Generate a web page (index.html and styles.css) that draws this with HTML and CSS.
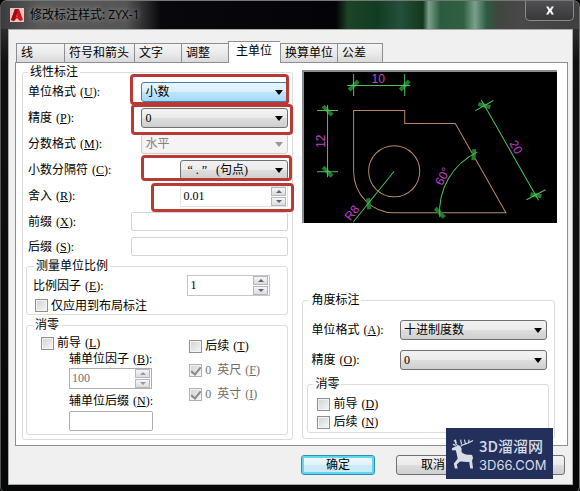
FILE: index.html
```html
<!DOCTYPE html>
<html lang="zh-CN">
<head>
    <meta charset="UTF-8">
    <meta name="viewport" content="width=device-width, initial-scale=1.0">
    <title>修改标注样式: ZYX-1</title>
    <link rel="stylesheet" href="styles.css">
</head>
<body>
    <div class="window">
        <header class="titlebar">
            <svg class="app-icon" viewBox="0 0 14 14" aria-hidden="true">
                <rect width="14" height="14" fill="#f0c4c4"/>
                <path d="M1 12 L5 1 H9 L13 12 L10 13 L7 10 L4 13 Z" fill="#d0141c"/>
                <path d="M5 1 H8 L6 9 L4 13 L1 12 Z" fill="#9c0c14"/>
                <path d="M7 6 L8 9 H6 Z" fill="#e8484c"/>
            </svg>
            <h1>修改标注样式: ZYX-1</h1>
            <button class="close" type="button" aria-label="关闭">
                <svg viewBox="0 0 12 10" aria-hidden="true">
                    <path d="M1 0 H4 L6 3 L8 0 H11 L8 5 L11 10 H8 L6 7 L4 10 H1 L4 5 Z" fill="#fff" stroke="#333" stroke-width="0.4"/>
                </svg>
            </button>
        </header>

        <form class="client">
            <nav class="tabs">
                <button type="button">线</button>
                <button type="button">符号和箭头</button>
                <button type="button">文字</button>
                <button type="button">调整</button>
                <button type="button" class="active">主单位</button>
                <button type="button">换算单位</button>
                <button type="button">公差</button>
            </nav>

            <main class="panel">
                <fieldset class="linear">
                    <legend>线性标注</legend>
                    <div class="row">
                        <label for="unit-format">单位格式<span class="key">(<u>U</u>):</span></label>
                        <div class="mark mark-format">
                            <div class="combo hot"><select id="unit-format"><option>小数</option></select></div>
                        </div>
                    </div>
                    <div class="row">
                        <label for="precision">精度<span class="key">(<u>P</u>):</span></label>
                        <div class="mark mark-precision">
                            <div class="combo"><select id="precision"><option>0</option></select></div>
                        </div>
                    </div>
                    <div class="row">
                        <label for="fraction">分数格式<span class="key">(<u>M</u>):</span></label>
                        <div class="combo off"><select id="fraction" disabled><option>水平</option></select></div>
                    </div>
                    <div class="row">
                        <label for="separator">小数分隔符<span class="key">(<u>C</u>):</span></label>
                        <div class="mark mark-separator">
                            <div class="combo narrow"><select id="separator"><option>“ . ”&nbsp;&nbsp; (句点)</option></select></div>
                        </div>
                    </div>
                    <div class="row">
                        <label for="round">舍入<span class="key">(<u>R</u>):</span></label>
                        <div class="mark mark-round">
                            <div class="spin wide">
                                <input type="text" id="round" value="0.01">
                                <span class="arrows"><button type="button" class="up" aria-label="增加"></button><button type="button" class="down" aria-label="减少"></button></span>
                            </div>
                        </div>
                    </div>
                    <div class="row text-row">
                        <label for="prefix">前缀<span class="key">(<u>X</u>):</span></label>
                        <input type="text" id="prefix" class="box">
                    </div>
                    <div class="row text-row">
                        <label for="suffix">后缀<span class="key">(<u>S</u>):</span></label>
                        <input type="text" id="suffix" class="box">
                    </div>

                    <fieldset class="scale">
                        <legend>测量单位比例</legend>
                        <div class="row">
                            <label for="factor">比例因子<span class="key">(<u>E</u>):</span></label>
                            <div class="spin">
                                <input type="text" id="factor" value="1">
                                <span class="arrows"><button type="button" class="up" aria-label="增加"></button><button type="button" class="down" aria-label="减少"></button></span>
                            </div>
                        </div>
                        <label class="check"><input type="checkbox">仅应用到布局标注</label>
                    </fieldset>

                    <fieldset class="zeros">
                        <legend>消零</legend>
                        <div class="leading">
                            <label class="check"><input type="checkbox"><span>前导<span class="key">(<u>L</u>)</span></span></label>
                            <div class="sub">
                                <label for="sub-factor">辅单位因子<span class="key">(<u>B</u>):</span></label>
                                <div class="spin off">
                                    <input type="text" id="sub-factor" value="100" disabled>
                                    <span class="arrows"><button type="button" class="up" aria-label="增加" disabled></button><button type="button" class="down" aria-label="减少" disabled></button></span>
                                </div>
                                <label for="sub-suffix">辅单位后缀<span class="key">(<u>N</u>):</span></label>
                                <input type="text" id="sub-suffix" class="box">
                            </div>
                        </div>
                        <div class="trailing">
                            <label class="check"><input type="checkbox"><span>后续<span class="key">(<u>T</u>)</span></span></label>
                            <label class="check off"><input type="checkbox" checked disabled><span><span class="num">0</span>英尺<span class="key">(<u>F</u>)</span></span></label>
                            <label class="check off"><input type="checkbox" checked disabled><span><span class="num">0</span>英寸<span class="key">(<u>I</u>)</span></span></label>
                        </div>
                    </fieldset>
                </fieldset>

                <div class="side">
                    <div class="preview">
                        <svg viewBox="305 72 252 151" role="img" aria-label="标注预览">
                            <g class="shape">
                                <path d="M354.5 171 V110.5 H405.5 V123.5 H456 L506.5 212.5 H395 A40.5 41.5 0 0 1 354.5 171"/>
                                <circle cx="395" cy="171" r="25.5"/>
                            </g>
                            <g class="ticks">
                                <path d="M350 90 L359 81 M401 90 L410 81"/>
                                <path d="M324 106 L333 115 M324 167 L333 176"/>
                                <path d="M479 104 L491 107 M531 194 L542 196"/>
                                <path d="M475 149 L474 160 M436 208 L445 217 M369 198 L370 209"/>
                            </g>
                            <g class="dims">
                                <path d="M348 85.5 H411 M354.5 74 V96 M405.5 74 V96"/>
                                <path d="M328.5 105 V177 M318 110.5 H339 M318 171.5 H339"/>
                                <path d="M482 100 L539 200 M476 110.5 L494 100.5 M527 199.5 L546 189.5"/>
                                <path d="M478 152 A66 66 0 0 0 440.5 217"/>
                                <path d="M395 171 L354 222"/>
                            </g>
                            <g class="values">
                                <text x="379" y="83">10</text>
                                <text transform="translate(326 141) rotate(-90)">12</text>
                                <text transform="translate(513 149) rotate(60)">20</text>
                                <text transform="translate(447 178) rotate(-62)">60°</text>
                                <text transform="translate(356 215) rotate(-51)">R8</text>
                            </g>
                        </svg>
                    </div>

                    <fieldset class="angular">
                        <legend>角度标注</legend>
                        <div class="row">
                            <label for="angle-format">单位格式<span class="key">(<u>A</u>):</span></label>
                            <div class="combo"><select id="angle-format"><option>十进制度数</option></select></div>
                        </div>
                        <div class="row">
                            <label for="angle-precision">精度<span class="key">(<u>O</u>):</span></label>
                            <div class="combo"><select id="angle-precision"><option>0</option></select></div>
                        </div>
                        <fieldset class="angle-zeros">
                            <legend>消零</legend>
                            <label class="check"><input type="checkbox"><span>前导<span class="key">(<u>D</u>)</span></span></label>
                            <label class="check"><input type="checkbox"><span>后续<span class="key">(<u>N</u>)</span></span></label>
                        </fieldset>
                    </fieldset>
                </div>
            </main>

            <footer class="actions">
                <button type="button" class="push default">确定</button>
                <button type="button" class="push">取消</button>
                <button type="button" class="push" aria-label="帮助"></button>
            </footer>
        </form>

        <div class="brand">
            <svg viewBox="0 0 24 32" aria-hidden="true">
                <path d="M5 8 L9 7 L11 10 L11 14 C14 17 18 17 22 17 L23 20 L22 23 L23 31 H20 L19 24 C15 25 12 23 9 24 L6 27 L7 31 H4 L3 26 L7 21 L6 16 L5 12 L1 12 L1 10 Z" fill="#d9dde6"/>
                <path d="M8 8 C5 6 4 3 5 1 M6 4 L3 2 M10 8 C13 5 17 6 23 2 M11 6 L10 1 M15 5 L14 1 M18 5 L19 1 M5 7 L2 6" fill="none" stroke="#d9dde6" stroke-width="1.2"/>
            </svg>
            <div class="brand-text">
                <strong>3D溜溜网</strong>
                <span>3D66.COM</span>
            </div>
        </div>
    </div>
</body>
</html>
```
FILE: styles.css
```css
* {
    box-sizing: border-box;
}
body {
    margin: 0;
    background-color: #000;
    color: #000;
    font-family: "Liberation Serif", "Noto Sans CJK SC", sans-serif;
    font-size: 12px;
    line-height: 14px;
}
button, input, select {
    font: inherit;
    color: inherit;
    margin: 0;
}

/* Window frame */
.window {
    position: relative;
    display: flex;
    flex-direction: column;
    min-height: 100vh;
    padding: 0 6px 7px 7px;
    border: 1px solid #777;
    border-left-color: #555;
    border-radius: 7px 7px 6px 6px;
    background: linear-gradient(to bottom, #444, #111 60px, #060808);
}
.titlebar {
    display: flex;
    align-items: center;
    height: 28px;
    margin: 0 -6px 0 -7px;
    padding: 0 5px 0 9px;
    border-radius: 6px 6px 0 0;
    background: linear-gradient(to right, #3c3c3c, #5a5a5a 40px, #555 125px, #08080c 160px, #040408 58%, #1c4426 60%, #123c22 65%, #24503c 69%, #14381c 73%, #7aa08c 74%, #2c5c40 76%, #30603f 80%, #7aa08c 82%, #2c5c40 84%, #41463f 86%, #484848 90%, #404042);
}
.app-icon {
    width: 14px;
    height: 14px;
    margin-right: 6px;
}
h1 {
    flex: 1;
    margin: 0;
    font: 12px/16px "Open Sans", "Noto Sans CJK SC", sans-serif;
    text-shadow: 0 0 4px #999, 0 0 8px #888;
}
.close {
    align-self: flex-start;
    display: flex;
    align-items: center;
    justify-content: center;
    width: 49px;
    height: 20px;
    padding: 0;
    border: 1px solid #8a8a8a;
    border-top: 0;
    border-radius: 0 0 5px 5px;
    background: linear-gradient(#505052, #38383a);
}
.close svg {
    width: 10px;
    height: 9px;
}
.client {
    flex: 1;
    display: flex;
    flex-direction: column;
    padding: 11px 4px 0 6px;
    background-color: #f0f0f0;
    border: 1px solid #aaa;
}

/* Tabs */
.tabs {
    display: flex;
    align-items: flex-end;
    padding-left: 1px;
}
.tabs button {
    height: 19px;
    padding: 0 18px 0 4px;
    border: 1px solid #8c8e94;
    border-bottom: 0;
    border-right-width: 0;
    background: linear-gradient(#f4f4f4, #ebebeb 50%, #dadada);
    text-align: left;
}
.tabs button:first-child {
    padding-right: 31px;
}
.tabs button:nth-child(2) {
    padding-right: 5px;
}
.tabs button:nth-child(6) {
    padding-right: 4px;
}
.tabs button:last-child {
    padding-right: 16px;
    border-right-width: 1px;
}
.tabs .active {
    position: relative;
    height: 22px;
    margin-bottom: -1px;
    padding: 0 8px 3px 7px;
    background: #fff;
}
.panel {
    display: grid;
    grid-template-columns: 272fr 255fr;
    gap: 9px;
    padding: 2px 10px 5px 6px;
    border: 1px solid #8c8e94;
    background-color: #fff;
}

/* Groups and rows */
fieldset {
    min-width: 0;
    margin: 0;
    padding: 0;
    border: 1px solid #dcdcdc;
    border-radius: 3px;
}
legend {
    height: 14px;
    margin-left: 2px;
    padding: 0 2px;
}
.linear {
    padding: 0 4px 4px 3px;
}
.row {
    display: flex;
    align-items: center;
    justify-content: space-between;
    height: 26px;
    padding-left: 2px;
}
.text-row {
    height: 25px;
}
.key {
    padding-left: 4px;
}
.scale {
    padding: 0 17px 1px 5px;
}
.scale .check {
    padding-left: 3px;
}
.scale .row {
    height: 25px;
    padding-left: 1px;
}
.zeros {
    display: grid;
    grid-template-columns: 148fr 98fr;
    margin-top: 3px;
    padding: 3px 0 3px 14px;
}
.zeros legend {
    margin-left: -8px;
}
.sub {
    display: flex;
    flex-direction: column;
    align-items: flex-start;
    padding: 1px 0 0 28px;
}
.sub .spin {
    margin: 2px 0 5px;
}
.sub .box {
    width: 84px;
    height: 20px;
    margin-top: 3px;
    border-color: #abadb3;
}
.trailing {
    display: flex;
    flex-direction: column;
    gap: 6px;
    padding-top: 2px;
}

/* Controls */
.combo {
    position: relative;
    width: 147px;
    height: 20px;
}
.combo::after {
    content: "";
    position: absolute;
    right: 5px;
    top: 8px;
    border: 4px solid transparent;
    border-top: 5px solid #000;
    border-bottom: 0;
    pointer-events: none;
}
.combo select {
    width: 100%;
    height: 100%;
    padding: 0 3px;
    border: 1px solid #707070;
    border-radius: 3px;
    background: linear-gradient(#f2f2f2, #ebebeb 50%, #dddddd 50%, #cfcfcf);
    appearance: none;
    -webkit-appearance: none;
}
.combo.hot select {
    border-color: #3c7fb1;
    background: linear-gradient(#eaf6fd, #d9f0fc 50%, #bee6fd 50%, #a7d9f5);
}
.combo.off select {
    border-color: #ccc;
    background: #f4f4f4;
    color: #838383;
    opacity: 1;
}
.combo.off::after {
    border-top-color: #999;
}
.combo.narrow {
    width: 108px;
}
.combo.narrow select {
    padding-left: 6px;
}
.box {
    width: 157px;
    height: 19px;
    padding: 0 3px;
    border: 1px solid #d4d5d8;
    border-radius: 2px;
    background-color: #fff;
}
.spin {
    display: flex;
    align-items: center;
    width: 83px;
    height: 21px;
    padding-right: 1px;
    border: 1px solid #c4c6ca;
    background-color: #fff;
}
.spin.wide {
    width: 108px;
    border-color: #e2e3e6;
}
.spin input {
    flex: 1;
    min-width: 0;
    height: 18px;
    padding: 0 2px;
    border: 0;
    background: none;
}
.spin.off {
    border-color: #abadb3;
    color: #6d6d6d;
}
.arrows {
    display: flex;
    flex-direction: column;
    gap: 1px;
}
.arrows button {
    display: flex;
    align-items: center;
    justify-content: center;
    width: 15px;
    height: 9px;
    padding: 0;
    border: 1px solid #b4b8bc;
    background: linear-gradient(#f6f6f6, #dcdcdc);
}
.arrows button::before {
    content: "";
    border: 3px solid transparent;
}
.arrows .up::before {
    border-top: 0;
    border-bottom-color: #5a6480;
}
.arrows .down::before {
    border-bottom: 0;
    border-top-color: #5a6480;
}
.off .arrows button::before {
    opacity: 0.6;
}
.check {
    display: flex;
    align-items: center;
    gap: 3px;
    height: 18px;
}
.leading .check {
    height: 16px;
}
.scale .check {
    height: 15px;
}
.check input {
    display: flex;
    justify-content: center;
    width: 13px;
    height: 13px;
    border: 1px solid #8e8f8f;
    background: linear-gradient(135deg, #cfd2d6, #f6f6f6);
    box-shadow: inset 0 0 0 1px #f4f4f4;
    appearance: none;
    -webkit-appearance: none;
}
.check input:checked::before {
    content: "";
    width: 4px;
    height: 8px;
    border: solid #8a8a8a;
    border-width: 0 2px 2px 0;
    transform: rotate(40deg);
}
.check.off {
    color: #6d6d6d;
}
.check.off input {
    border-color: #b1b1b1;
}
.num {
    padding-right: 6px;
}

/* Red frames round the highlighted settings */
.mark {
    position: relative;
}
.mark::before {
    content: "";
    position: absolute;
    z-index: 1;
    border: 3px solid #b93a34;
    border-radius: 4px;
    pointer-events: none;
}
.mark-format::before {
    inset: -8px -1px -3px -11px;
}
.mark-precision::before {
    inset: -4px -5px -7px -10px;
}
.mark-separator::before {
    inset: -5px -4px -1px -39px;
}
.mark-round::before {
    inset: -3px -6px -5px -29px;
}

/* Right column */
.side {
    display: flex;
    flex-direction: column;
    justify-content: space-between;
    padding: 5px 0 1px;
}
.preview {
    border: solid #8a8d8d;
    border-width: 2px 0 0 2px;
    background-color: #000;
}
.preview svg {
    display: block;
    width: 100%;
}
.shape, .dims, .ticks {
    fill: none;
}
.shape {
    stroke: #b88a68;
}
.dims {
    stroke: #4cc45c;
}
.ticks {
    stroke: #237a2c;
    stroke-width: 4;
}
.values {
    fill: #c040cc;
    font-family: "Liberation Sans", sans-serif;
    font-size: 12px;
    text-anchor: middle;
}
.angular {
    margin-right: 2px;
    padding: 8px 5px 5px 4px;
}
.angular .row {
    height: 30px;
    padding: 0 2px 0 4px;
}
.angle-zeros {
    margin-top: 2px;
    padding: 4px 0 1px 9px;
}
.angle-zeros legend {
    margin-left: -4px;
}

/* Buttons */
.actions {
    display: flex;
    justify-content: flex-end;
    gap: 21px;
    padding: 9px 3px 9px;
}
.push {
    width: 74px;
    height: 20px;
    padding: 0;
    border: 1px solid #707070;
    border-radius: 3px;
    background: linear-gradient(#f2f2f2, #ebebeb 50%, #dddddd 50%, #cfcfcf);
}
.push.default {
    border-color: #2c8fb0;
    background: linear-gradient(#eefafe, #e0f2f8 50%, #cdeaf3 50%, #c8ecf6);
    box-shadow: inset 0 0 0 2px #62d4f4;
}

/* Badge over the lower right corner */
.brand {
    position: absolute;
    right: 26px;
    bottom: 13px;
    display: flex;
    align-items: center;
    gap: 5px;
    width: 107px;
    height: 51px;
    padding-left: 5px;
    background-color: #24305c;
    color: #d9dde6;
    font-family: "Noto Sans CJK SC", sans-serif;
}
.brand svg {
    width: 23px;
    height: 32px;
}
.brand-text {
    display: flex;
    flex-direction: column;
}
.brand strong {
    font-size: 15px;
    font-weight: 500;
    line-height: 22px;
}
.brand span {
    font: 13px/16px Inter, sans-serif;
}
```
